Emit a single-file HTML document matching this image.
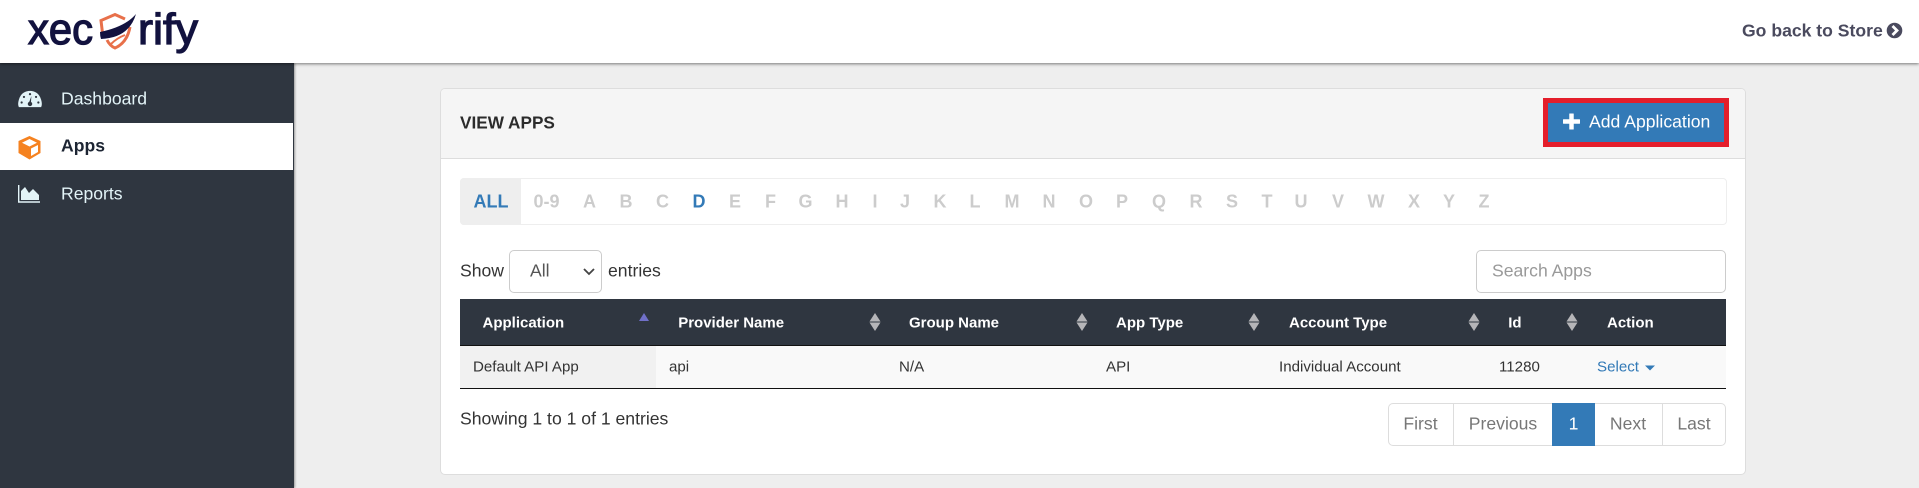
<!DOCTYPE html>
<html>
<head>
<meta charset="utf-8">
<style>
html,body{margin:0;padding:0;width:1919px;height:488px;overflow:hidden;background:#eee;font-family:"Liberation Sans",Arial,sans-serif;color:#333}
.a{position:absolute;white-space:nowrap}
.t{position:absolute;white-space:nowrap;transform:translateY(-50%)}
.l{position:absolute;top:202px;transform:translate(-50%,-50%);font-weight:700;font-size:18px;color:#ccc}
.th{position:absolute;top:322.500px;transform:translateY(-50%);font-weight:700;font-size:15px;color:#fff;white-space:nowrap}
.td{position:absolute;top:367px;transform:translateY(-50%);font-size:15.100px;color:#333;white-space:nowrap}
.pg{position:absolute;top:424px;transform:translate(-50%,-50%);font-size:17.6px;color:#777}
.dv{position:absolute;top:403px;height:43px;width:1px;background:#ddd}
</style>
</head>
<body>
<div class="a" style="left:0;top:0;width:1919px;height:63px;background:#fff;box-shadow:0 1px 3px rgba(0,0,0,.5);z-index:3"></div>
<svg class="a" style="left:0;top:0;z-index:4" width="220" height="63" viewBox="0 0 220 63">
<text x="28" y="44" font-family="Liberation Sans" font-size="44" fill="#12123f" stroke="#12123f" stroke-width="1.300" textLength="65" lengthAdjust="spacingAndGlyphs">xec</text>
<text x="138" y="44" font-family="Liberation Sans" font-size="44" fill="#12123f" stroke="#12123f" stroke-width="1.300" textLength="60" lengthAdjust="spacingAndGlyphs">rify</text>
<path d="M125 19 L115 14.500 L101 20.500 L102.500 33" fill="none" stroke="#e8704a" stroke-width="3"/>
<path d="M107 40 Q110 46 115 48 Q127 43 130 27" fill="none" stroke="#e8704a" stroke-width="3"/>
<path d="M111 44 Q117 38 125 35" fill="none" stroke="#e8704a" stroke-width="2"/>
<path d="M136 14 Q125 27 100 32 Q100 36 101 39 Q129 38 136 14 Z" fill="#12123f"/>
</svg>
<div class="t" style="left:1742px;top:30.500px;font-weight:700;font-size:17.6px;color:#4a4a5e;z-index:4">Go back to Store</div>
<svg class="a" style="left:1886px;top:22px;z-index:4" width="17" height="17" viewBox="0 0 17 17"><circle cx="8.500" cy="8.500" r="7.800" fill="#4a4a5e"/><path d="M6.500 4 L11 8.500 L6.500 13" fill="none" stroke="#fff" stroke-width="2.800"/></svg>

<div class="a" style="left:0;top:63px;width:294px;height:425px;background:#2f3640;box-shadow:1px 0 2px rgba(0,0,0,.35);z-index:2"></div>
<div class="a" style="left:0;top:123px;width:293px;height:47px;background:#fff;z-index:2"></div>
<div class="t" style="left:61px;top:98.500px;font-size:17.6px;color:#e3f4f8;z-index:3">Dashboard</div>
<div class="t" style="left:61px;top:146px;font-size:17.6px;font-weight:700;color:#1d2533;z-index:3">Apps</div>
<div class="t" style="left:61px;top:194px;font-size:17.6px;color:#e3f4f8;z-index:3">Reports</div>
<svg class="a" style="left:17px;top:90px;z-index:3" width="26" height="18.500" viewBox="0 2 28 19">
<path d="M2 20 Q.5 17 2 12 C4 5 9 2.500 14 2.500 C19 2.500 24 5 26 12 Q27.500 17 26 20 Z" fill="#e3f4f8"/>
<circle cx="14" cy="6" r="1.200" fill="#2f3640"/><circle cx="7.500" cy="9" r="1.200" fill="#2f3640"/><circle cx="20.500" cy="9" r="1.200" fill="#2f3640"/><circle cx="5" cy="15" r="1.200" fill="#2f3640"/><circle cx="23" cy="15" r="1.200" fill="#2f3640"/>
<path d="M15.500 8 L15 15 L13 15 Z" fill="#2f3640"/><circle cx="14" cy="16.500" r="2.400" fill="#2f3640"/></svg>
<svg class="a" style="left:17px;top:135px;z-index:3" width="25" height="25" viewBox="0 0 25 25">
<path d="M12.500 1 L23.500 6 V18 L12.500 24.500 L1.500 18 V6 Z" fill="#f58220"/>
<path d="M12.500 4 L20 7.800 L12.500 11.500 L5 7.800 Z" fill="#fff"/>
<path d="M14 13.500 L21 10 V17 L14 21 Z" fill="#fff"/></svg>
<svg class="a" style="left:18px;top:185px;z-index:3" width="24" height="18" viewBox="0 0 24 18">
<path d="M.7 0 V17 H22" fill="none" stroke="#e3f4f8" stroke-width="1.400"/>
<path d="M3 15 V6 L7 2 L11 8 L15 4 L21 10 V15 Z" fill="#e3f4f8"/></svg>

<div class="a" style="left:440px;top:88px;width:1304px;height:385px;background:#fff;border:1px solid #ddd;border-radius:5px"></div>
<div class="a" style="left:441px;top:89px;width:1304px;height:69px;background:#f5f5f5;border-bottom:1px solid #ddd;border-radius:4px 4px 0 0"></div>
<div class="t" style="left:460px;top:122.500px;font-weight:700;font-size:17.200px;color:#2b2b2b">VIEW APPS</div>
<div class="a" style="left:1543px;top:98px;width:176px;height:39px;border:5px solid #e41e2b;background:#337ab7"></div>
<svg class="a" style="left:1563px;top:113px" width="17" height="17" viewBox="0 0 19 19"><path d="M7.500 1 H11.500 V7.500 H18.500 V11.500 H11.500 V18 H7.500 V11.500 H.5 V7.500 H7.500 Z" fill="#fff" stroke="#fff" stroke-linejoin="round"/></svg>
<div class="t" style="left:1589px;top:122px;font-size:17.6px;color:#fff">Add Application</div>

<div class="a" style="left:460px;top:178px;width:1265px;height:45px;border:1px solid #eee;border-radius:4px"></div>
<div class="a" style="left:460px;top:178px;width:61px;height:47px;background:#eee;border-radius:4px 0 0 4px"></div>
<div class="l" style="left:491px;color:#337ab7">ALL</div>
<div class="l" style="left:546.500px">0-9</div>
<div class="l" style="left:589.500px">A</div>
<div class="l" style="left:626px">B</div>
<div class="l" style="left:662.500px">C</div>
<div class="l" style="left:699px;color:#337ab7">D</div>
<div class="l" style="left:735px">E</div>
<div class="l" style="left:770.500px">F</div>
<div class="l" style="left:805.500px">G</div>
<div class="l" style="left:842px">H</div>
<div class="l" style="left:875px">I</div>
<div class="l" style="left:905px">J</div>
<div class="l" style="left:940px">K</div>
<div class="l" style="left:975px">L</div>
<div class="l" style="left:1012px">M</div>
<div class="l" style="left:1049px">N</div>
<div class="l" style="left:1086px">O</div>
<div class="l" style="left:1122px">P</div>
<div class="l" style="left:1159px">Q</div>
<div class="l" style="left:1196px">R</div>
<div class="l" style="left:1232px">S</div>
<div class="l" style="left:1267px">T</div>
<div class="l" style="left:1301px">U</div>
<div class="l" style="left:1338px">V</div>
<div class="l" style="left:1376px">W</div>
<div class="l" style="left:1414px">X</div>
<div class="l" style="left:1449px">Y</div>
<div class="l" style="left:1484px">Z</div>

<div class="t" style="left:460px;top:271px;font-size:17.6px;color:#333">Show</div>
<div class="a" style="left:509px;top:250px;width:91px;height:41px;border:1px solid #ccc;border-radius:5px;background:#fff"></div>
<div class="t" style="left:530px;top:271px;font-size:17.6px;color:#555">All</div>
<svg class="a" style="left:583px;top:267px" width="12" height="9" viewBox="0 0 12 9"><path d="M1 2 L6 7 L11 2" fill="none" stroke="#444" stroke-width="1.800"/></svg>
<div class="t" style="left:608px;top:271px;font-size:17.6px;color:#333">entries</div>
<div class="a" style="left:1476px;top:250px;width:248px;height:41px;border:1px solid #ccc;border-radius:5px;background:#fff"></div>
<div class="t" style="left:1492px;top:271px;font-size:17.6px;color:#999">Search Apps</div>

<div class="a" style="left:460px;top:299px;width:1266px;height:46px;background:#2f3640"></div>
<div class="a" style="left:460px;top:345px;width:1266px;height:1px;background:#111"></div>
<div class="a" style="left:460px;top:346px;width:1266px;height:42px;background:#f9f9f9"></div>
<div class="a" style="left:460px;top:346px;width:196px;height:42px;background:#f1f1f1"></div>
<div class="a" style="left:460px;top:388px;width:1266px;height:1px;background:#111"></div>
<div class="th" style="left:482.500px">Application</div>
<div class="th" style="left:678.200px">Provider Name</div>
<div class="th" style="left:909px">Group Name</div>
<div class="th" style="left:1116px">App Type</div>
<div class="th" style="left:1289px">Account Type</div>
<div class="th" style="left:1508.200px">Id</div>
<div class="th" style="left:1607px">Action</div>
<svg class="a" style="left:638px;top:312px" width="12" height="10" viewBox="0 0 12 10"><path d="M6 1 L11 9 H1 Z" fill="#7070c8"/></svg>
<svg class="a" style="left:869px;top:312px" width="12" height="20" viewBox="0 0 12 20"><path d="M6 1 L11.500 9.500 H.5 Z M.5 10.500 H11.500 L6 19 Z" fill="#b5b5b8"/></svg>
<svg class="a" style="left:1076px;top:312px" width="12" height="20" viewBox="0 0 12 20"><path d="M6 1 L11.500 9.500 H.5 Z M.5 10.500 H11.500 L6 19 Z" fill="#b5b5b8"/></svg>
<svg class="a" style="left:1248px;top:312px" width="12" height="20" viewBox="0 0 12 20"><path d="M6 1 L11.500 9.500 H.5 Z M.5 10.500 H11.500 L6 19 Z" fill="#b5b5b8"/></svg>
<svg class="a" style="left:1468px;top:312px" width="12" height="20" viewBox="0 0 12 20"><path d="M6 1 L11.500 9.500 H.5 Z M.5 10.500 H11.500 L6 19 Z" fill="#b5b5b8"/></svg>
<svg class="a" style="left:1566px;top:312px" width="12" height="20" viewBox="0 0 12 20"><path d="M6 1 L11.500 9.500 H.5 Z M.5 10.500 H11.500 L6 19 Z" fill="#b5b5b8"/></svg>
<div class="td" style="left:473px">Default API App</div>
<div class="td" style="left:669px">api</div>
<div class="td" style="left:899px">N/A</div>
<div class="td" style="left:1106px">API</div>
<div class="td" style="left:1279px">Individual Account</div>
<div class="td" style="left:1499px">11280</div>
<div class="td" style="left:1597px;color:#337ab7">Select</div>
<svg class="a" style="left:1645px;top:365px" width="10" height="6" viewBox="0 0 10 6"><path d="M0 .5 H10 L5 5.500 Z" fill="#337ab7"/></svg>

<div class="t" style="left:460px;top:419px;font-size:17.6px;color:#333">Showing 1 to 1 of 1 entries</div>
<div class="a" style="left:1388px;top:403px;width:336px;height:41px;border:1px solid #ddd;border-radius:5px"></div>
<div class="dv" style="left:1453px"></div>
<div class="dv" style="left:1662px"></div>
<div class="a" style="left:1552px;top:403px;width:43px;height:43px;background:#337ab7"></div>
<div class="pg" style="left:1420.500px">First</div>
<div class="pg" style="left:1503px">Previous</div>
<div class="pg" style="left:1573.500px;color:#fff">1</div>
<div class="pg" style="left:1628px">Next</div>
<div class="pg" style="left:1694px">Last</div>
</body>
</html>
